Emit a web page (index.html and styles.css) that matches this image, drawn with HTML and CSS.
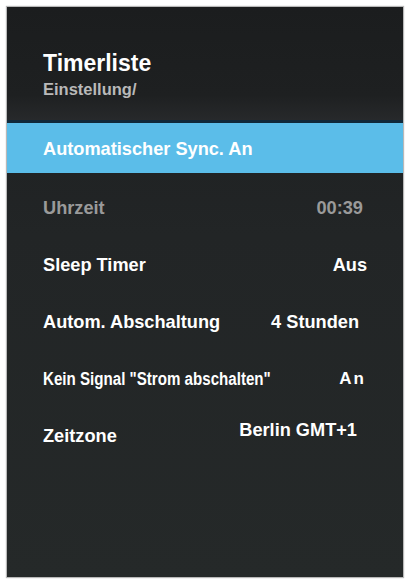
FILE: index.html
```html
<!doctype html>
<html lang="de">
<head>
  <meta charset="utf-8">
  <title>Timerliste</title>
  <link rel="stylesheet" href="styles.css">
</head>
<body>

<div class="panel">
  <div class="head">
    <div class="title">Timerliste</div>
    <div class="crumb">Einstellung/</div>
  </div>

  <div class="sel">Automatischer Sync. An</div>

  <div class="list">
    <div class="row dim">
      <span class="lbl">Uhrzeit</span>
      <span class="val r1">00:39</span>
    </div>
    <div class="row">
      <span class="lbl">Sleep Timer</span>
      <span class="val r2">Aus</span>
    </div>
    <div class="row">
      <span class="lbl">Autom. Abschaltung</span>
      <span class="val r3">4 Stunden</span>
    </div>
    <div class="row">
      <span class="lbl narrow">Kein Signal "Strom abschalten"</span>
      <span class="val r4 spaced">An</span>
    </div>
    <div class="row">
      <span class="lbl">Zeitzone</span>
      <span class="val r5 up">Berlin GMT+1</span>
    </div>
  </div>
</div>

</body>
</html>
```

FILE: styles.css
```css
BODY { margin: 0; background: #fff; font-family: "Liberation Sans", Arial, sans-serif; }

.panel {
  margin: 7px 4px 4px 7px;
  height: 570px;
  background: linear-gradient(180deg, #1c1e1f 0%, #222526 40%, #252929 100%);
  box-shadow: 0 0 1px 1px #b8b8b8;
  color: #fff;
  font-weight: bold;
}

.head {
  height: 116px;
  padding: 45px 0 0 36px;
  box-sizing: border-box;
  background: linear-gradient(180deg, #1b1d1e 0%, #1e2021 78%, #27292b 100%);
  border-bottom: 3px solid #10293a;
}
.title { font-size: 23px; line-height: 23px; }
.crumb { font-size: 16.5px; line-height: 16.5px; margin-top: 6px; color: #b9b9b9; }

.sel {
  height: 50px;
  padding: 3px 0 0 36px;
  box-sizing: border-box;
  display: flex;
  align-items: center;
  background: #5bbde9;
  font-size: 18.2px;
}

.list { padding-top: 6px; }
.row {
  height: 57px;
  display: flex;
  align-items: center;
  justify-content: space-between;
  padding-left: 36px;
  font-size: 18.2px;
  line-height: 20px;
}
.row.dim { color: #9a9a9a; }

.narrow {
  display: inline-block;
  font-size: 18px;
  transform: scaleX(0.84);
  transform-origin: left center;
}
.spaced { letter-spacing: 2px; font-size: 17px; }
.up { padding-bottom: 12px; }

.r1 { margin-right: 40px; }
.r2 { margin-right: 36px; }
.r3 { margin-right: 44px; }
.r4 { margin-right: 37px; }
.r5 { margin-right: 46px; }
```
